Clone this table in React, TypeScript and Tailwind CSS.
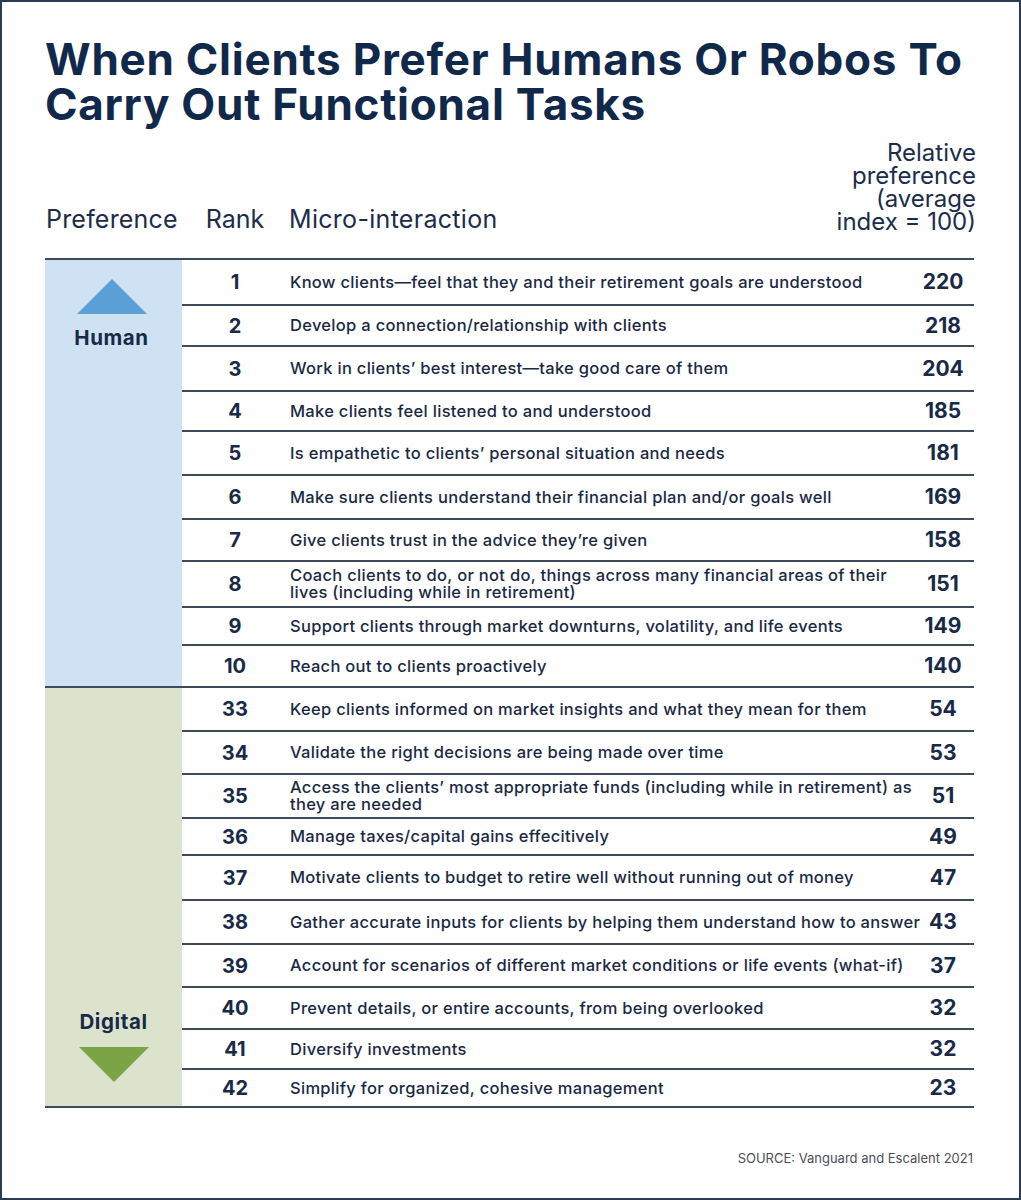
import React from "react";

type Row = { rank: string; text: React.ReactNode; value: string; h: string };

const human: Row[] = [
  { rank: "1", text: "Know clients—feel that they and their retirement goals are understood", value: "220", h: "h-[44px]" },
  { rank: "2", text: "Develop a connection/relationship with clients", value: "218", h: "h-[41px]" },
  { rank: "3", text: "Work in clients’ best interest—take good care of them", value: "204", h: "h-[45px]" },
  { rank: "4", text: "Make clients feel listened to and understood", value: "185", h: "h-[40px]" },
  { rank: "5", text: "Is empathetic to clients’ personal situation and needs", value: "181", h: "h-[44px]" },
  { rank: "6", text: "Make sure clients understand their financial plan and/or goals well", value: "169", h: "h-[44px]" },
  { rank: "7", text: "Give clients trust in the advice they’re given", value: "158", h: "h-[42px]" },
  {
    rank: "8",
    text: (
      <>
        <div>Coach clients to do, or not do, things across many financial areas of their</div>
        <div>lives (including while in retirement)</div>
      </>
    ),
    value: "151",
    h: "h-[46px]",
  },
  { rank: "9", text: "Support clients through market downturns, volatility, and life events", value: "149", h: "h-[38px]" },
  { rank: "10", text: "Reach out to clients proactively", value: "140", h: "h-[42px]" },
];

const digital: Row[] = [
  { rank: "33", text: "Keep clients informed on market insights and what they mean for them", value: "54", h: "h-[42px]" },
  { rank: "34", text: "Validate the right decisions are being made over time", value: "53", h: "h-[43px]" },
  {
    rank: "35",
    text: (
      <>
        <div>Access the clients’ most appropriate funds (including while in retirement) as</div>
        <div>they are needed</div>
      </>
    ),
    value: "51",
    h: "h-[44px]",
  },
  { rank: "36", text: "Manage taxes/capital gains effecitively", value: "49", h: "h-[37px]" },
  { rank: "37", text: "Motivate clients to budget to retire well without running out of money", value: "47", h: "h-[45px]" },
  { rank: "38", text: "Gather accurate inputs for clients by helping them understand how to answer", value: "43", h: "h-[44px]" },
  { rank: "39", text: "Account for scenarios of different market conditions or life events (what-if)", value: "37", h: "h-[43px]" },
  { rank: "40", text: "Prevent details, or entire accounts, from being overlooked", value: "32", h: "h-[42px]" },
  { rank: "41", text: "Diversify investments", value: "32", h: "h-[40px]" },
  { rank: "42", text: "Simplify for organized, cohesive management", value: "23", h: "h-[38px]" },
];

function Rows({ rows }: { rows: Row[] }) {
  return (
    <div className="w-[792px] shrink-0 flex flex-col">
      {rows.map((r, i) => (
        <div
          key={r.rank}
          className={`flex items-center w-[792px] ${r.h} ${i > 0 ? "border-t-2 border-[#3d4b5d]" : ""}`}
        >
          <div className="w-[106px] shrink-0 text-center text-[20px] font-bold text-[#182a47]">{r.rank}</div>
          <div className="w-[626px] shrink-0 pl-[2px] text-[16.5px] leading-[17px] tracking-[0.3px] font-medium text-[#1a2943] whitespace-nowrap overflow-visible">
            {r.text}
          </div>
          <div className="w-[58px] shrink-0 text-center text-[21px] font-bold text-[#182a47]">{r.value}</div>
        </div>
      ))}
    </div>
  );
}

export default function App() {
  return (
    <div className="w-[1021px] h-[1200px] bg-white border-2 border-[#2a3c55] font-['Inter','Noto_Sans',sans-serif] text-[#13294b] overflow-hidden">
      <div className="pl-[43px] pr-[45px]">
        <h1 className="pt-[35px] text-[44px] leading-[45px] font-bold tracking-[0.75px] text-[#10294b]">
          <div className="h-[45px]">When Clients Prefer Humans Or Robos To</div>
          <div className="h-[45px]">Carry Out Functional Tasks</div>
        </h1>

        <div className="mt-[14px] flex items-end justify-between text-[#1c2c4a]">
          <div className="flex items-end mb-[2px] text-[25px] leading-[24px]">
            <div className="w-[137px] pl-[1px] tracking-[0.2px]">Preference</div>
            <div className="w-[106px] text-center">Rank</div>
            <div className="pl-[1px] tracking-[0.3px]">Micro-interaction</div>
          </div>
          <div className="text-right text-[24px] leading-[23px] mr-[-2px]">
            <div className="h-[23px]">Relative</div>
            <div className="h-[23px]">preference</div>
            <div className="h-[23px]">(average</div>
            <div className="h-[23px]">index = 100)</div>
          </div>
        </div>

        <div className="mt-[25px] w-[929px] border-t-2 border-b-2 border-[#3d4b5d] overflow-hidden">
          <div className="flex">
            <div className="w-[137px] shrink-0 bg-[#cfe2f3] flex flex-col items-center pt-[19px]">
              <svg width="70" height="35" viewBox="0 0 70 35" className="mr-[4px]">
                <polygon points="35,0 70,35 0,35" fill="#5a9fd6" />
              </svg>
              <div className="mt-[14px] mr-[4px] text-[20.5px] leading-[20px] tracking-[0.6px] font-bold text-[#182a47]">
                Human
              </div>
            </div>
            <Rows rows={human} />
          </div>
          <div className="flex border-t-2 border-[#3d4b5d]">
            <div className="w-[137px] shrink-0 bg-[#dce3cc] flex flex-col items-center justify-end pb-[24px]">
              <div className="mb-[15px] text-[20.5px] leading-[20px] tracking-[0.6px] font-bold text-[#182a47]">
                Digital
              </div>
              <svg width="70" height="35" viewBox="0 0 70 35">
                <polygon points="0,0 70,0 35,35" fill="#7aa445" />
              </svg>
            </div>
            <Rows rows={digital} />
          </div>
        </div>

        <div className="mt-[42px] text-right text-[13px] leading-[16px] text-[#4a4f57] pr-[1px]">
          SOURCE: Vanguard and Escalent 2021
        </div>
      </div>
    </div>
  );
}
